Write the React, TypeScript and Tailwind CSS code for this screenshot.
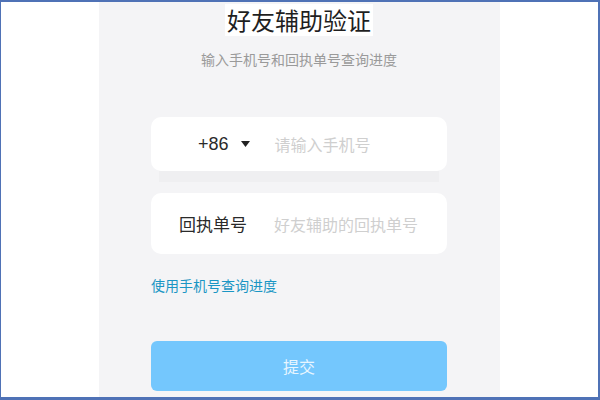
export default function App() {
  return (
    <div
      className="w-[600px] h-[400px] bg-white border-[#4f72b6] border-t-[2px] border-l-[1px] border-r-[2px] border-b-[3px] flex justify-center overflow-hidden"
      style={{ fontFamily: '"Noto Sans CJK SC", "Noto Sans", sans-serif' }}
    >
      <div className="w-[401px] h-full bg-[#f4f4f6] flex flex-col items-center pt-[2px] -ml-[1px]">
        {/* Title */}
        <h1 className="text-[24px] leading-[32px] text-[#1f1f1f] bg-white px-[2px]">好友辅助验证</h1>
        <p className="mt-[13px] text-[14px] leading-[20px] text-[#9a9a9a]">输入手机号和回执单号查询进度</p>

        {/* Phone input */}
        <div className="mt-[48px] w-[296px] flex flex-col">
          <div className="h-[54px] bg-white rounded-[10px] flex items-center pl-[47px]">
            <span className="text-[18px] text-[#2a2a2a]" style={{ fontFamily: '"Liberation Sans", sans-serif' }}>
              +86
            </span>
            <svg className="ml-[12px]" width="9" height="6" viewBox="0 0 9 6">
              <path d="M0 0 L9 0 L4.5 6 Z" fill="#222" />
            </svg>
            <span className="ml-[25px] text-[16px] text-[#cfcfcf]">请输入手机号</span>
          </div>
          <div className="h-[11px] mx-[8px] bg-[#efeff1]" />

          {/* Receipt input */}
          <div className="mt-[11px] h-[61px] bg-white rounded-[10px] flex items-center pl-[28px]">
            <span className="text-[17px] text-[#2a2a2a]">回执单号</span>
            <span className="ml-[27px] text-[16px] text-[#cfcfcf]">好友辅助的回执单号</span>
          </div>

          <a className="mt-[21px] text-[14px] leading-[20px] text-[#1a96c4] cursor-pointer">使用手机号查询进度</a>

          <button className="mt-[46px] h-[50px] rounded-[6px] bg-[#74c7fd] text-[16px] text-[#e8f6ff]">提交</button>
        </div>
      </div>
    </div>
  )
}
